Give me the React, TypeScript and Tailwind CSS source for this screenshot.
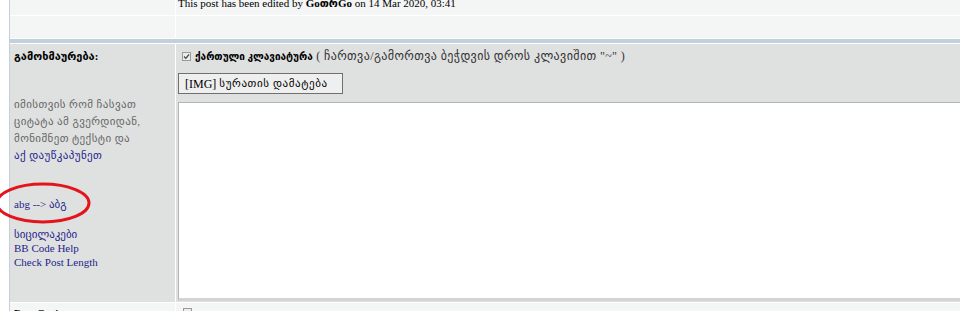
import React from "react";

const FONT = "font-['Liberation_Serif','DejaVu_Sans',serif]";

export default function App() {
  return (
    <div className={`relative w-[960px] h-[311px] overflow-hidden bg-white text-[11px] text-black ${FONT}`}>
      <div className="ml-[9px] border-l border-[#c2cfdf]">
        <div className="grid grid-cols-[165px_1fr] gap-px bg-white">
          {/* edited-by row */}
          <div className="h-[15px] bg-[#f4f5f5]" />
          <div className="h-[15px] bg-[#f4f5f5] pl-[2px] overflow-hidden">
            <div className="-mt-[4px] leading-[14px] whitespace-nowrap">
              This post has been edited by <b>GoთრGo</b> on 14 Mar 2020, 03:41
            </div>
          </div>

          <div className="h-[22px] bg-[#f4f5f5]" />
          <div className="h-[22px] bg-[#f4f5f5]" />

          <div className="col-span-2 h-[4px] bg-[#c2cfdf]" />

          {/* reply form */}
          <div className="h-[258px] bg-[#dfe0e0] pl-[4px] pt-[5px]">
            <div className="font-bold text-[11px] leading-[14px]">გამოხმაურება:</div>
            <div className="mt-[33px] text-[11px] tracking-[0.4px] leading-[17px] text-[#666]">
              <div>იმისთვის რომ ჩასვათ</div>
              <div>ციტატა ამ გვერდიდან,</div>
              <div>მონიშნეთ ტექსტი და</div>
              <div className="text-[#1e1e8a]">აქ დაუწკაპუნეთ</div>
            </div>
            <div className="mt-[33px] leading-[14px] text-[#1e1e8a]">
              <div>abg --&gt; აბგ</div>
              <div className="mt-[16px]">სიცილაკები</div>
              <div>BB Code Help</div>
              <div>Check Post Length</div>
            </div>
          </div>
          <div className="h-[258px] bg-[#dfe0e0] pl-[2px] pt-[5px] overflow-hidden">
            <div className="flex items-center gap-[4px] pl-[4px] h-[14px]">
              <span className="w-[9px] h-[9px] border border-[#9a9a9a] bg-[#ececec] flex items-center justify-center">
                <svg width="7" height="7" viewBox="0 0 7 7">
                  <path d="M1 3.5 L2.8 5.3 L6 1.5" fill="none" stroke="#444" strokeWidth="1.2" />
                </svg>
              </span>
              <span className="whitespace-nowrap text-[10px]">
                <b>ქართული კლავიატურა</b>
                <span className="text-[#333] text-[12px] tracking-[0.4px]"> ( ჩართვა/გამორთვა ბეჭდვის დროს კლავიშით "~" )</span>
              </span>
            </div>
            <div className="mt-[10px] w-[165px] h-[21px] border border-[#707070] bg-[#efefef] flex items-center pl-[6px] text-[12px] whitespace-nowrap">
              [IMG] <span className="text-[11px] tracking-[0.6px] ml-[3px]">სურათის დამატება</span>
            </div>
            <div className="mt-[8px] w-[820px] h-[199px] bg-white border-t border-l border-[#b4b4b4] border-b-[3px] border-b-[#d4d4d4]" />
          </div>

          {/* next row */}
          <div className="h-[20px] bg-[#f4f5f5] pl-[4px] pt-[3px] font-bold leading-[14px]">Post Options</div>
          <div className="h-[20px] bg-[#f4f5f5] pl-[7px] pt-[4px] flex gap-[5px] leading-[14px]">
            <span className="mt-[1px] w-[9px] h-[9px] border border-[#9a9a9a] bg-[#ececec]" />
            <b>Enable emoticons?</b>
          </div>
        </div>
      </div>

      {/* hand-drawn annotation */}
      <svg className="absolute left-0 top-0 pointer-events-none" width="120" height="311">
        <ellipse cx="43" cy="203" rx="46" ry="19" fill="none" stroke="#e3141c" strokeWidth="3" />
      </svg>
    </div>
  );
}
